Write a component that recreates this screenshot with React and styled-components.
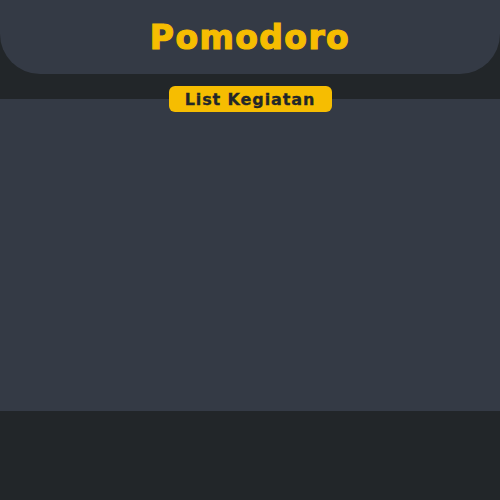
import React from "react";
import styled, { createGlobalStyle } from "styled-components";

const GlobalStyle = createGlobalStyle`
  html, body {
    margin: 0;
    padding: 0;
    background: #222629;
  }
  body {
    font-family: "DejaVu Sans", "Liberation Sans", sans-serif;
  }
`;

const App = () => {
  return (
    <Page>
      <GlobalStyle />
      <Header>
        <Title>Pomodoro</Title>
      </Header>
      <TabRow>
        <TabButton>List Kegiatan</TabButton>
      </TabRow>
      <Panel />
    </Page>
  );
};

export default App;

const Page = styled.div`
  width: 500px;
  height: 500px;
  background: #222629;
  display: flex;
  flex-direction: column;
  overflow: hidden;
`;

const Header = styled.header`
  height: 74px;
  background: #343a45;
  border-radius: 0 0 40px 40px;
  display: flex;
  align-items: center;
  justify-content: center;
`;

const Title = styled.h1`
  margin: 0;
  color: #f6bd01;
  font-family: "DejaVu Sans", sans-serif;
  font-weight: 900;
  font-size: 33px;
  letter-spacing: 1.4px;
  -webkit-text-stroke: 1.2px #f6bd01;
`;

const TabRow = styled.div`
  display: flex;
  justify-content: center;
  margin-top: 12px;
  margin-bottom: -13px;
  position: relative;
  z-index: 1;
`;

const TabButton = styled.button`
  height: 26px;
  width: 163px;
  border: none;
  border-radius: 6px;
  background: #f6bd01;
  color: #222629;
  font-family: "DejaVu Sans", sans-serif;
  font-weight: 900;
  font-size: 16px;
  letter-spacing: 0.9px;
  -webkit-text-stroke: 0.3px #222629;
  padding: 0;
  cursor: pointer;
`;

const Panel = styled.main`
  height: 312px;
  background: #343a45;
`;
